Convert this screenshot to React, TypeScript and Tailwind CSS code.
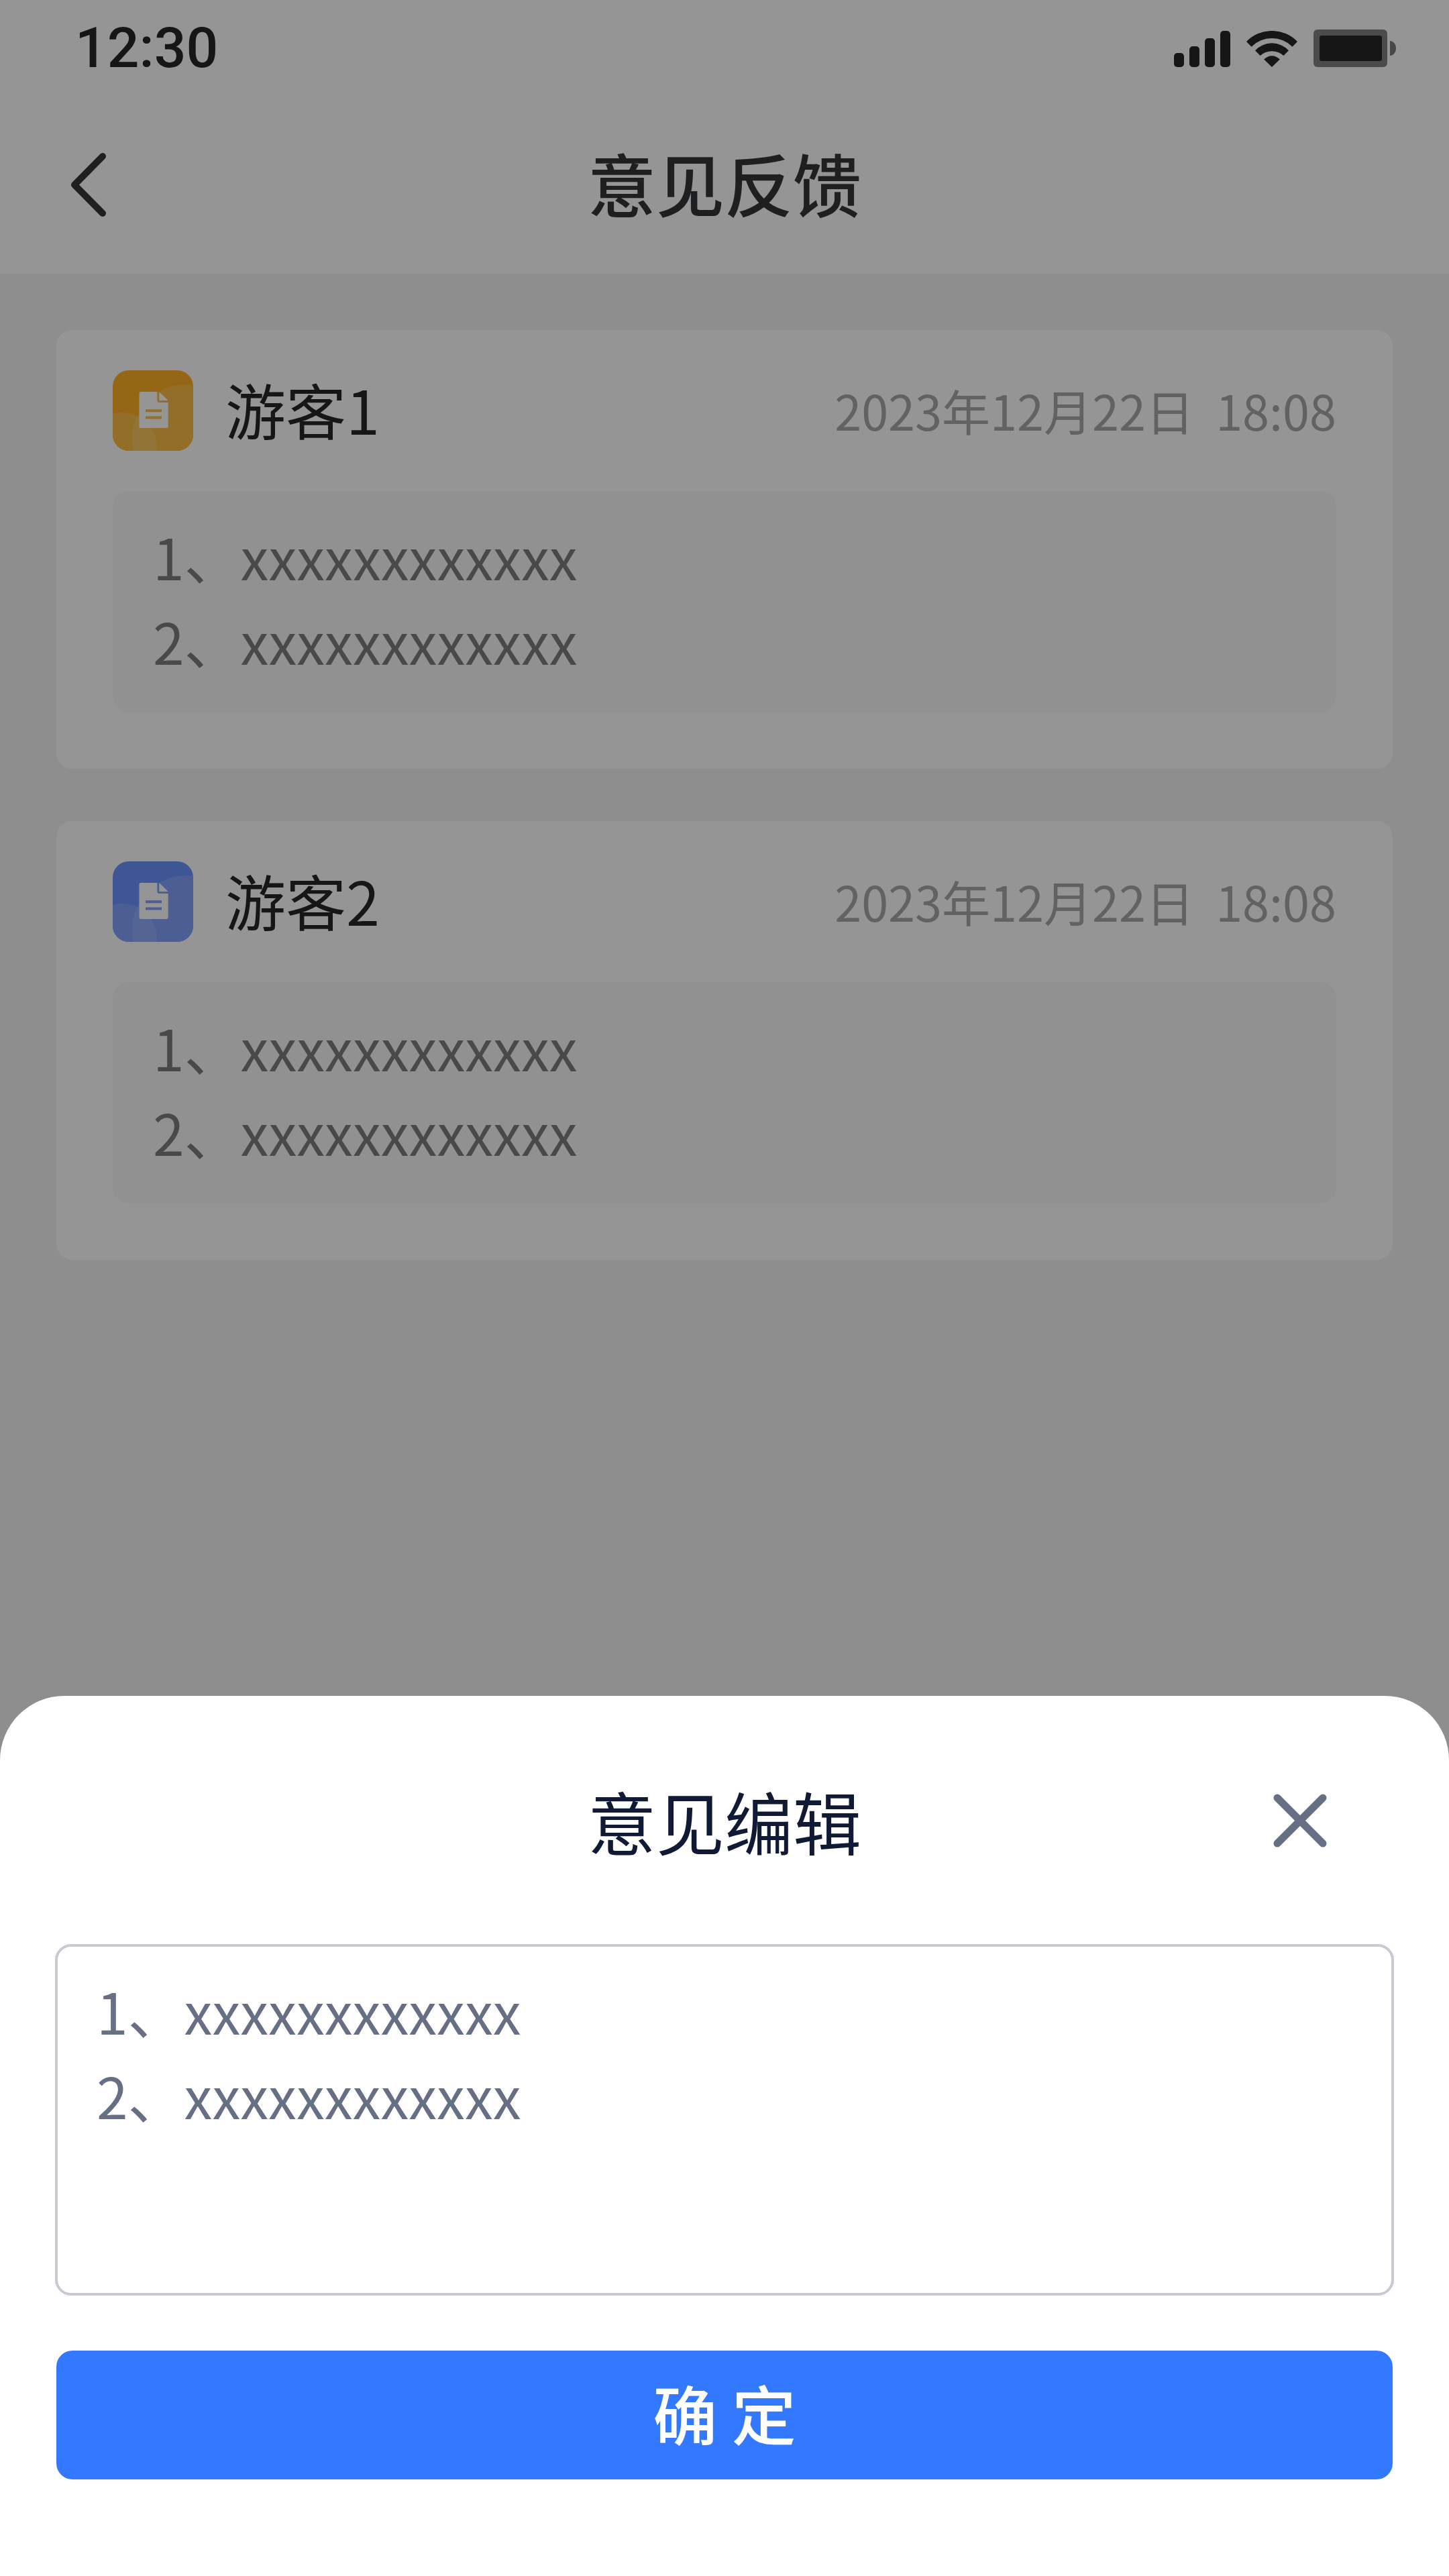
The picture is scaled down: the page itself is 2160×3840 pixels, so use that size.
type Tone = 'orange' | 'blue';

interface Feedback {
  name: string;
  time: string;
  tone: Tone;
  lines: string[];
}

const feedback: Feedback[] = [
  {
    name: '游客1',
    time: '2023年12月22日  18:08',
    tone: 'orange',
    lines: ['1、xxxxxxxxxxxx', '2、xxxxxxxxxxxx'],
  },
  {
    name: '游客2',
    time: '2023年12月22日  18:08',
    tone: 'blue',
    lines: ['1、xxxxxxxxxxxx', '2、xxxxxxxxxxxx'],
  },
];

const tones: Record<Tone, { base: string; light: string; lightest: string }> = {
  orange: { base: '#ffa100', light: '#f9b127', lightest: '#f7bf45' },
  blue: { base: '#5181fb', light: '#6d91fb', lightest: '#7f9ffb' },
};

function SignalIcon() {
  return (
    <svg width="84" height="54" viewBox="0 0 84 54" fill="currentColor" aria-hidden="true">
      <rect x="0" y="33" width="15" height="21" rx="5" />
      <rect x="23" y="23" width="15" height="31" rx="5" />
      <rect x="46" y="11" width="15" height="43" rx="5" />
      <rect x="69" y="0" width="15" height="54" rx="5" />
    </svg>
  );
}

function WifiIcon() {
  return (
    <svg width="76" height="54" viewBox="0 0 76 54" fill="currentColor" aria-hidden="true">
      <path d="M0 16A53 53 0 0 1 76 16L68.5 23.7A43 43 0 0 0 7.5 23.7Z" />
      <path d="M13 29.3A34 34 0 0 1 63 29.3L55.5 37A26 26 0 0 0 20.5 37Z" />
      <path d="M26.2 42.5A16 16 0 0 1 49.8 42.5L38 54Z" />
    </svg>
  );
}

function BatteryIcon() {
  return (
    <svg width="123" height="56" viewBox="0 0 123 56" aria-hidden="true">
      <rect width="110" height="56" rx="6" fill="#6b6b6b" />
      <rect x="9" y="9" width="93" height="38" rx="3" fill="#000" />
      <path d="M114 17C119 17 123 22 123 28C123 34 119 39 114 39Z" fill="#676767" />
    </svg>
  );
}

function DocumentIcon({ tone }: { tone: Tone }) {
  const { base, light, lightest } = tones[tone];
  const tile = `tile-${tone}`;
  const glow = `glow-${tone}`;
  return (
    <svg width="120" height="120" viewBox="0 0 120 120" aria-hidden="true">
      <defs>
        <clipPath id={tile}>
          <rect width="120" height="120" rx="24" />
        </clipPath>
        <clipPath id={glow}>
          <circle cx="110" cy="102" r="81" />
        </clipPath>
      </defs>
      <g clipPath={`url(#${tile})`}>
        <rect width="120" height="120" fill={base} />
        <circle cx="110" cy="102" r="81" fill={light} />
        <circle cx="14.5" cy="114" r="51" fill={light} />
        <circle cx="14.5" cy="114" r="51" fill={lightest} clipPath={`url(#${glow})`} />
      </g>
      <path
        d="M42 32H66.3V44.5Q66.3 48 69.8 48H82.7V83.5Q82.7 86 80.2 86H42Q39.5 86 39.5 83.5V34.5Q39.5 32 42 32Z"
        fill="#fff"
      />
      <path d="M69.3 32L82.7 45H69.3Z" fill="#fff" />
      <path d="M49 60.3H73M49 70.6H73" stroke={light} strokeWidth="4" />
    </svg>
  );
}

function FeedbackCard({ item }: { item: Feedback }) {
  return (
    <article className="rounded-3xl bg-white px-[84px] pt-[60px] pb-[84px]">
      <div className="flex h-[120px] items-center">
        <DocumentIcon tone={item.tone} />
        <h2 className="ml-12 pb-1.5 text-[90px] leading-[114px] text-black">{item.name}</h2>
        <time className="ml-auto pb-0.5 text-[72px] leading-[114px] whitespace-pre text-[#999]">{item.time}</time>
      </div>
      <div className="mt-[60px] rounded-3xl bg-[#f7f7f7] px-[60px] pt-[34px] pb-11 text-[84px] leading-[126px] text-[#666]">
        {item.lines.map((line) => (
          <p key={line}>{line}</p>
        ))}
      </div>
    </article>
  );
}

function StatusBar() {
  return (
    <div className="flex h-36 items-center justify-between pr-[79px] pl-[112px] text-black">
      <span className="font-[Roboto,sans-serif] text-[84px] leading-none font-medium">12:30</span>
      <div className="flex items-end gap-6">
        <SignalIcon />
        <WifiIcon />
        <BatteryIcon />
      </div>
    </div>
  );
}

export default function App() {
  return (
    <div className="relative min-h-screen bg-[#f1f1f1] font-['Noto_Sans_CJK_SC',sans-serif]">
      <header className="bg-white">
        <StatusBar />
        <div className="grid h-[264px] grid-cols-[1fr_auto_1fr] items-center px-[84px] text-[#0f1317]">
          <button type="button" aria-label="返回" className="flex size-24 items-center justify-center">
            <svg width="56" height="96" viewBox="0 0 56 96" fill="none" aria-hidden="true">
              <path
                d="M49 5L7 47.5L49 90"
                stroke="currentColor"
                strokeWidth="10"
                strokeLinecap="round"
                strokeLinejoin="round"
              />
            </svg>
          </button>
          <h1 className="pb-2 text-[102px] leading-[144px] font-medium">意见反馈</h1>
        </div>
      </header>

      <main className="flex flex-col gap-[78px] px-[84px] pt-[84px]">
        {feedback.map((item) => (
          <FeedbackCard key={item.name} item={item} />
        ))}
      </main>

      <div className="absolute inset-0 bg-[#2b2b2b]/50" />

      <section
        role="dialog"
        aria-labelledby="editor-title"
        className="absolute inset-x-0 bottom-0 flex flex-col rounded-t-[96px] bg-white px-[82px] pb-36"
      >
        <div className="grid h-[370px] grid-cols-[1fr_auto_1fr] items-center pt-0.5">
          <h2 id="editor-title" className="col-start-2 text-[102px] leading-[144px] text-[#101a35]">
            意见编辑
          </h2>
          <button
            type="button"
            aria-label="关闭"
            className="mr-[90px] flex size-[100px] items-center justify-center justify-self-end text-[#676f85]"
          >
            <svg width="80" height="80" viewBox="0 0 80 80" aria-hidden="true">
              <path d="M6 6L74 74M74 6L6 74" stroke="currentColor" strokeWidth="11" strokeLinecap="round" />
            </svg>
          </button>
        </div>
        <textarea
          aria-labelledby="editor-title"
          defaultValue={'1、xxxxxxxxxxxx\n2、xxxxxxxxxxxx'}
          className="h-[524px] w-full resize-none rounded-3xl border-4 border-[#c5cad5] bg-white px-[58px] py-8 text-[84px] leading-[126px] text-[#676f85] outline-none"
        />
        <button
          type="button"
          className="mx-0.5 mt-[82px] h-48 rounded-3xl bg-[#3379ff] pb-2 text-[96px] leading-[144px] font-medium text-white"
        >
          确 定
        </button>
      </section>
    </div>
  );
}
